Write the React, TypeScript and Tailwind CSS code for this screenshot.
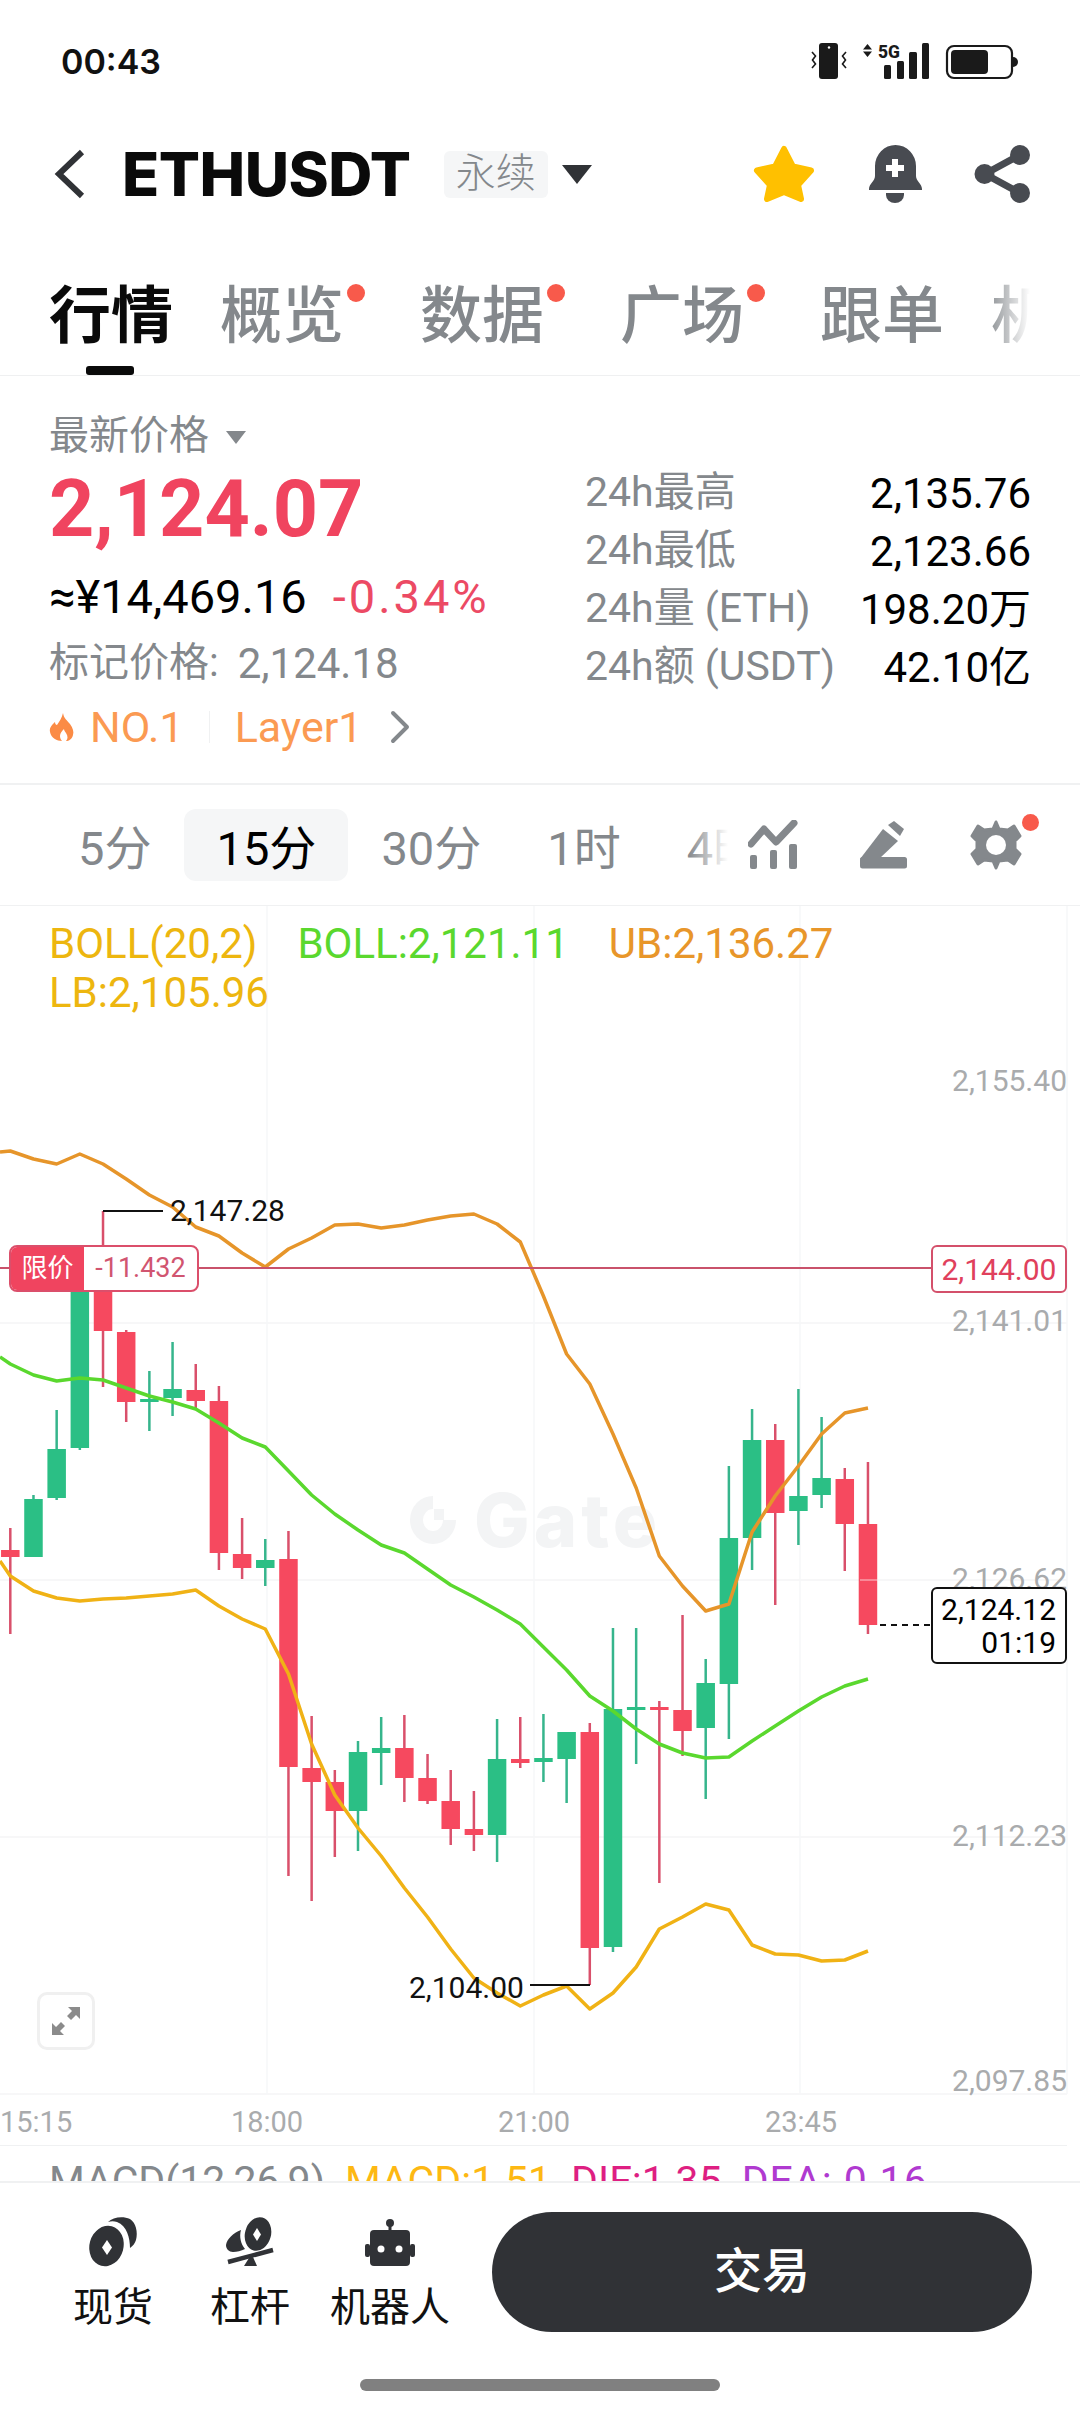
import { ChevronRight } from 'lucide-react';

// [wickTop, bodyTop, bodyBottom, wickBottom, up]
const CANDLES: [number, number, number, number, boolean][] = [
  [1528, 1550, 1557, 1634, false],
  [1495, 1499, 1557, 1557, true],
  [1410, 1449, 1498, 1500, true],
  [1280, 1285, 1448, 1450, true],
  [1211, 1285, 1331, 1387, false],
  [1330, 1332, 1402, 1422, false],
  [1371, 1399, 1402, 1431, true],
  [1342, 1389, 1398, 1416, true],
  [1364, 1390, 1401, 1409, false],
  [1386, 1401, 1553, 1570, false],
  [1518, 1554, 1568, 1579, false],
  [1539, 1560, 1568, 1586, true],
  [1531, 1559, 1767, 1876, false],
  [1716, 1768, 1782, 1901, false],
  [1770, 1782, 1811, 1857, false],
  [1741, 1752, 1811, 1851, true],
  [1717, 1748, 1753, 1785, true],
  [1715, 1748, 1778, 1802, false],
  [1754, 1778, 1801, 1804, false],
  [1770, 1801, 1829, 1845, false],
  [1791, 1829, 1835, 1851, false],
  [1719, 1759, 1835, 1862, true],
  [1717, 1759, 1763, 1768, false],
  [1714, 1758, 1762, 1782, true],
  [1732, 1732, 1759, 1803, true],
  [1723, 1732, 1948, 1985, false],
  [1628, 1709, 1947, 1952, true],
  [1628, 1707, 1709, 1764, true],
  [1701, 1707, 1710, 1883, false],
  [1615, 1710, 1731, 1756, false],
  [1659, 1683, 1728, 1799, true],
  [1466, 1538, 1684, 1739, true],
  [1409, 1440, 1538, 1570, true],
  [1424, 1440, 1513, 1605, false],
  [1389, 1496, 1511, 1545, true],
  [1417, 1478, 1495, 1508, true],
  [1468, 1479, 1524, 1571, false],
  [1462, 1524, 1625, 1634, false],
];

const UB = [1151, 1159, 1164, 1154, 1164, 1179, 1195, 1207, 1227, 1236, 1253, 1267, 1249, 1238, 1225, 1224, 1228, 1225, 1220, 1216, 1214, 1224, 1242, 1296, 1354, 1384, 1434, 1488, 1556, 1586, 1611, 1604, 1532, 1496, 1466, 1434, 1413, 1408];
const MB = [1364, 1375, 1381, 1378, 1380, 1388, 1396, 1402, 1409, 1423, 1438, 1447, 1471, 1495, 1514, 1530, 1545, 1553, 1569, 1585, 1597, 1610, 1624, 1647, 1670, 1696, 1711, 1729, 1744, 1753, 1758, 1757, 1741, 1726, 1711, 1697, 1686, 1679];
const LB = [1576, 1591, 1598, 1601, 1599, 1598, 1596, 1594, 1590, 1606, 1619, 1629, 1674, 1744, 1795, 1828, 1856, 1888, 1917, 1949, 1978, 1993, 2006, 1995, 1986, 2009, 1993, 1967, 1929, 1917, 1904, 1910, 1945, 1954, 1955, 1961, 1960, 1951];

const xAt = (i: number) => 10.3 + 23.18 * i;
const linePoints = (ys: number[], startY: number) =>
  `0,${startY} ` + ys.map((y, i) => `${xAt(i).toFixed(1)},${y}`).join(' ');

function StatusIcons() {
  return (
    <svg width="210" height="44" viewBox="811 40 210 44" className="shrink-0">
      <rect x="819" y="44" width="19" height="36" rx="3" fill="#1a1a1a" />
      <circle cx="829" cy="48.5" r="1.2" fill="#fff" />
      <path d="M812 53l3.5 4-3 4 3 4-3.500 4M846 53l-3.500 4 3 4-3 4 3.500 4" fill="none" stroke="#1a1a1a" strokeWidth="1.600" />
      <path d="M863 50.500l4.500-5.500 4.500 5.500zM863 52.500h9l-4.500 5.500z" fill="#1a1a1a" />
      <text x="878" y="59" fontSize="19" fontWeight="800" fill="#1a1a1a" fontFamily="Roboto, sans-serif" textLength="22" lengthAdjust="spacingAndGlyphs">5G</text>
      <rect x="884" y="66" width="7" height="14" rx="1.500" fill="#1a1a1a" />
      <rect x="897" y="62" width="7" height="18" rx="1.500" fill="#1a1a1a" />
      <rect x="909" y="53" width="8" height="27" rx="1.500" fill="#1a1a1a" />
      <rect x="922" y="44" width="7" height="36" rx="1.500" fill="#1a1a1a" />
      <rect x="947" y="47" width="65" height="32" rx="7" fill="none" stroke="#1a1a1a" strokeWidth="2.200" />
      <rect x="951" y="51" width="37" height="24" rx="4" fill="#1a1a1a" />
      <path d="M1013 58a5 5 0 0 1 0 10z" fill="#1a1a1a" />
    </svg>
  );
}

function BackIcon() {
  return (
    <svg width="32" height="50" viewBox="54 149 32 50" className="shrink-0">
      <path d="M82 152l-23 22 23 22" fill="none" stroke="#303236" strokeWidth="6" />
    </svg>
  );
}

function StarIcon() {
  return (
    <svg width="62" height="58" viewBox="752 145 62 58">
      <path
        d="M783 149l9 17.500 18 4-13 14.500 3 14-17-7-17 7 3-14-13-14.500 18-4z"
        fill="#FFC000"
        stroke="#FFC000"
        strokeWidth="6"
        strokeLinejoin="round"
      />
    </svg>
  );
}

function BellIcon() {
  return (
    <svg width="54" height="58" viewBox="866 145 54 58">
      <path d="M872 166a20.500 21 0 0 1 41 0v10c0 5 6 8 6 13v1h-53v-1c0-5 6-8 6-13z" fill="#484B51" />
      <path d="M883 193h18v2a9 8 0 0 1-18 0z" fill="#484B51" />
      <path d="M892 159v18M883 168h18" stroke="#fff" strokeWidth="6" />
    </svg>
  );
}

function ShareIcon() {
  return (
    <svg width="56" height="58" viewBox="974 145 56 58">
      <path d="M1020 155l-35 19 35 19" fill="none" stroke="#484B51" strokeWidth="7" />
      <circle cx="1020" cy="155" r="10" fill="#484B51" />
      <circle cx="984.500" cy="174" r="10" fill="#484B51" />
      <circle cx="1020" cy="193" r="10" fill="#484B51" />
    </svg>
  );
}

function FlameIcon() {
  return (
    <svg width="26" height="30" viewBox="50 711 26 30" className="shrink-0">
      <path
        d="M64 712c1 6 4 7 7 11 3 4 4 8 3 11-1 4-4 6-7 6 2-2 2-5 0-8-1-1-2-3-2-4-2 2-4 4-4 7 0 2 1 4 2 5-5 0-11-3-12-9-1-5 3-8 5-10 0 2 1 3 2 3 2-3 5-7 6-12z"
        fill="#FB8B45"
      />
    </svg>
  );
}

function IndicatorIcon() {
  return (
    <svg width="50" height="50" viewBox="748 820 50 50">
      <path d="M751 844l13-15 12 13 18-19" fill="none" stroke="#84888C" strokeWidth="7" strokeLinejoin="round" strokeLinecap="round" />
      <rect x="750" y="855" width="7" height="14" rx="2" fill="#84888C" />
      <rect x="770" y="850" width="7" height="19" rx="2" fill="#84888C" />
      <rect x="789" y="844" width="8" height="25" rx="2" fill="#84888C" />
    </svg>
  );
}

function PenIcon() {
  return (
    <svg width="48" height="50" viewBox="860 820 48 50">
      <path d="M860 859l23-30 15 12-18 17z" fill="#84888C" />
      <path d="M888 825l6-4 10 8-4 7z" fill="#84888C" />
      <rect x="860" y="857" width="47" height="11.500" rx="2.500" fill="#84888C" />
    </svg>
  );
}

function GearIcon() {
  return (
    <svg width="52" height="52" viewBox="970 819 52 52">
      <path
        d="M996 822l3 7 9 1 6-4 6 10-5 5v8l5 5-6 10-6-4-9 1-3 7-3-7-9-1-6 4-6-10 5-5v-8l-5-5 6-10 6 4 9-1z"
        fill="#84888C"
        stroke="#84888C"
        strokeWidth="3"
        strokeLinejoin="round"
      />
      <circle cx="996" cy="845" r="10" fill="#fff" />
    </svg>
  );
}

function SpotIcon() {
  return (
    <svg width="50" height="52" viewBox="89 2216 50 52">
      <path d="M109 2222c5-5 15-6 22-3 6 4 8 13 6 21-1 3-3 6-6 8 0-10-3-22-13-26-3-1-6-1-9 0z" fill="#303236" />
      <ellipse cx="107.500" cy="2246" rx="17" ry="20.500" transform="rotate(15 107.500 2246)" fill="#303236" />
      <path d="M108 2240l5 7.500-5 7.500-5-7.500z" fill="#fff" />
    </svg>
  );
}

function MarginIcon() {
  return (
    <svg width="50" height="52" viewBox="228 2216 50 52">
      <ellipse cx="261" cy="2234" rx="13" ry="17" transform="rotate(15 261 2234)" fill="#303236" />
      <path d="M260 2228l4 6.500-4 6.500-4-6.500z" fill="#fff" />
      <path d="M244 2230c-8 3-14 9-15 15 0 4 3 7 7 7 4 0 8-1 12-3-4-5-6-12-4-19z" fill="#303236" />
      <path d="M231 2262l45-12" stroke="#303236" strokeWidth="4.500" />
      <path d="M247 2266h13l-4-9-4 1z" fill="#303236" />
    </svg>
  );
}

function RobotIcon() {
  return (
    <svg width="52" height="50" viewBox="364 2214 52 50">
      <circle cx="390" cy="2219" r="4" fill="#303236" />
      <rect x="388.500" y="2220" width="3" height="8" fill="#303236" />
      <rect x="370" y="2226" width="40" height="36" rx="4" fill="#303236" />
      <rect x="365" y="2240" width="5" height="13" rx="2" fill="#303236" />
      <rect x="410" y="2240" width="5" height="13" rx="2" fill="#303236" />
      <circle cx="381" cy="2245" r="3.500" fill="#fff" />
      <circle cx="399" cy="2245" r="3.500" fill="#fff" />
    </svg>
  );
}

function ChartDrawing() {
  return (
    <svg width="1080" height="1189" viewBox="0 906 1080 1189" className="absolute left-0 top-0">
      {[1323, 1580, 1837, 2094].map((y) => (
        <line key={y} x1="0" x2="1067" y1={y} y2={y} stroke="#F4F5F6" strokeWidth="1.500" />
      ))}
      {[267, 534, 800, 1067].map((x) => (
        <line key={x} x1={x} x2={x} y1="906" y2="2094" stroke="#F6F7F8" strokeWidth="1.500" />
      ))}
      {CANDLES.map(([wickTop, top, bottom, wickBottom, up], i) => {
        const x = xAt(i);
        return (
          <g key={i}>
            <line x1={x} x2={x} y1={wickTop} y2={wickBottom} stroke={up ? '#36B58C' : '#D9506B'} strokeWidth="2.500" />
            <rect x={x - 9.250} y={top} width="18.500" height={Math.max(bottom - top, 3)} fill={up ? '#2BBF85' : '#F6495F'} />
          </g>
        );
      })}
      <line x1="860" x2="878" y1="1580" y2="1580" stroke="#fff" strokeWidth="1" opacity="0.700" />
      <polyline points={linePoints(UB, 1152)} fill="none" stroke="#E6952A" strokeWidth="3.500" strokeLinejoin="round" />
      <polyline points={linePoints(MB, 1357)} fill="none" stroke="#5AD82E" strokeWidth="3.500" strokeLinejoin="round" />
      <polyline points={linePoints(LB, 1561)} fill="none" stroke="#F0B215" strokeWidth="3.500" strokeLinejoin="round" />
      <line x1="0" x2="931" y1="1268" y2="1268" stroke="#C9526B" strokeWidth="2" />
      <path d="M103 1211h60M530 1985h60" fill="none" stroke="#111" strokeWidth="2" />
      <line x1="880" x2="931" y1="1625" y2="1625" stroke="#111" strokeWidth="2" strokeDasharray="6 5" />
    </svg>
  );
}

function PriceAxisLabel({ className, children }: { className: string; children: string }) {
  return <div className={`absolute right-[13px] text-[30px] leading-[36px] text-[#A9ABAD] ${className}`}>{children}</div>;
}

function StatRow({ label, value }: { label: string; value: string }) {
  return (
    <div className="flex h-[58px] items-center justify-between">
      <span className="text-[41px] text-[#84888C]">{label}</span>
      <span className="text-[42px] text-black">{value}</span>
    </div>
  );
}

function Tab({ label, dot }: { label: string; dot?: boolean }) {
  return (
    <div className={`relative shrink-0 font-medium text-[#84888C] ${dot ? 'pr-[29px]' : ''}`}>
      {label}
      {dot && <span className="absolute left-[127px] top-[3px] h-[18px] w-[18px] rounded-full bg-[#F85A4B]" />}
    </div>
  );
}

export default function App() {
  return (
    <div className="relative h-[2412px] w-[1080px] overflow-hidden bg-white font-[Roboto,'Noto_Sans_CJK_SC',sans-serif]">
      {/* Status bar */}
      <div className="flex h-[122px] items-center justify-between pl-[61px] pr-[59px]">
        <span className="font-[Inter] text-[34px] font-semibold text-[#111]">00:43</span>
        <StatusIcons />
      </div>

      {/* Header */}
      <div className="flex h-[104px] items-center justify-between pl-[54px] pr-[50px]">
        <div className="flex items-center">
          <BackIcon />
          <span className="ml-[36px] font-[Inter] text-[61px] font-extrabold leading-none tracking-[-0.5px] text-[#0a0a0a]">ETHUSDT</span>
          <span className="ml-[33px] flex h-[47px] w-[104px] items-center justify-center rounded-[6px] bg-[#F5F6F7] text-[40px] font-light text-[#84888C]">永续</span>
          <span className="ml-[14px] h-0 w-0 border-x-[15px] border-t-[19px] border-x-transparent border-t-[#303236]" />
        </div>
        <div className="flex items-center">
          <StarIcon />
          <div className="ml-[54px]"><BellIcon /></div>
          <div className="ml-[51px]"><ShareIcon /></div>
        </div>
      </div>

      {/* Tabs */}
      <div className="relative h-[150px] border-b border-[#EFF0F1]">
        <div className="flex w-[1030px] gap-[47px] overflow-hidden pl-[49px] pt-[55px] text-[62px] leading-[72px]">
          <div className="shrink-0 font-semibold text-[#0a0a0a]">行情</div>
          <Tab label="概览" dot />
          <Tab label="数据" dot />
          <Tab label="广场" dot />
          <Tab label="跟单" />
          <Tab label="机器人" />
        </div>
        <div className="absolute left-[985px] top-[50px] h-[80px] w-[45px] bg-gradient-to-r from-white/0 to-white" />
        <div className="absolute bottom-0 left-[86px] h-[9px] w-[48px] rounded-[3px] bg-[#0a0a0a]" />
      </div>

      {/* Price summary */}
      <div className="flex h-[409px] border-b-2 border-[#F0F1F2] text-[40px]">
        <div className="w-[585px] pl-[49px] pt-[34px]">
          <div className="flex h-[52px] items-center text-[#84888C]">
            最新价格
            <span className="ml-[17px] mt-[2px] h-0 w-0 border-x-[10px] border-t-[13px] border-x-transparent border-t-[#84888C]" />
          </div>
          <div className="flex h-[94px] items-center text-[79px] font-bold leading-none text-[#F0445F]">2,124.07</div>
          <div className="flex h-[82px] items-center text-[47px]">
            <span className="text-black">≈¥14,469.16</span>
            <span className="ml-[26px] tracking-[3px] text-[#EC4A64]">-0.34%</span>
          </div>
          <div className="flex h-[50px] items-center text-[#84888C]">
            标记价格: <span className="ml-[19px] text-[42px]">2,124.18</span>
          </div>
          <div className="flex h-[78px] items-center text-[43px] text-[#FB9A52]">
            <FlameIcon />
            <span className="ml-[15px]">NO.1</span>
            <span className="mx-[25px] h-[32px] w-px bg-[#F0F1F2]" />
            <span>Layer1</span>
            <ChevronRight className="ml-[10px] h-[56px] w-[56px] text-[#84888C]" strokeWidth={1.700} />
          </div>
        </div>
        <div className="w-[446px] pt-[88px]">
          <StatRow label="24h最高" value="2,135.76" />
          <StatRow label="24h最低" value="2,123.66" />
          <StatRow label="24h量 (ETH)" value="198.20万" />
          <StatRow label="24h额 (USDT)" value="42.10亿" />
        </div>
      </div>

      {/* Interval selector */}
      <div className="flex h-[121px] items-center border-b border-[#F0F1F2] text-[47px]">
        <div className="relative flex w-[728px] shrink-0 items-center overflow-hidden pl-[45px]">
          <span className="h-[72px] shrink-0 px-[33px] leading-[80px] text-[#84888C]">5分</span>
          <span className="h-[72px] w-[164px] shrink-0 rounded-[12px] bg-[#F5F6F7] text-center leading-[80px] text-black">15分</span>
          <span className="h-[72px] shrink-0 px-[33px] leading-[80px] text-[#84888C]">30分</span>
          <span className="h-[72px] shrink-0 px-[33px] leading-[80px] text-[#84888C]">1时</span>
          <span className="h-[72px] shrink-0 px-[33px] leading-[80px] text-[#84888C]">4时</span>
          <div className="absolute right-0 top-0 h-[72px] w-[40px] bg-gradient-to-r from-white/0 to-white" />
        </div>
        <div className="ml-[20px]"><IndicatorIcon /></div>
        <div className="ml-[62px]"><PenIcon /></div>
        <div className="relative ml-[62px]">
          <GearIcon />
          <span className="absolute left-[52px] top-[-5px] h-[17px] w-[17px] rounded-full bg-[#F85A4B]" />
        </div>
      </div>

      {/* Chart */}
      <div className="relative h-[1189px]">
        {/* Watermark sits under the candles */}
        <div className="absolute left-[410px] top-[586px] flex h-[56px] items-center text-[#F3F4F5]">
          <svg width="46" height="50" viewBox="0 0 46 50">
            <path d="M23 1a23 24 0 1 0 23 24H33a10 11 0 1 1-10-11z" fill="#F3F4F5" />
            <rect x="24" y="14" width="10" height="11" fill="#F3F4F5" />
          </svg>
          <span className="ml-[18px] font-[Inter] text-[74px] font-extrabold leading-none tracking-[4px]">Gate</span>
        </div>

        <ChartDrawing />

        <div className="relative flex flex-wrap gap-x-[40px] px-[49px] pt-[13px] text-[42px] leading-[49px]">
          <span className="text-[#EDB60F]">BOLL(20,2)</span>
          <span className="text-[#5AD82E]">BOLL:2,121.11</span>
          <span className="text-[#E8962A]">UB:2,136.27</span>
          <span className="text-[#EDB60F]">LB:2,105.96</span>
        </div>

        <PriceAxisLabel className="top-[157px]">2,155.40</PriceAxisLabel>
        <PriceAxisLabel className="top-[397px]">2,141.01</PriceAxisLabel>
        <PriceAxisLabel className="top-[655px]">2,126.62</PriceAxisLabel>
        <PriceAxisLabel className="top-[912px]">2,112.23</PriceAxisLabel>
        <PriceAxisLabel className="top-[1157px]">2,097.85</PriceAxisLabel>

        {/* Limit order tag */}
        <div className="absolute left-[9px] top-[339px] flex h-[47px] w-[190px] overflow-hidden rounded-[8px] border-2 border-[#DB4F6B] bg-white">
          <span className="flex w-[73px] items-center justify-center bg-[#F0445F] text-[26px] text-white">限价</span>
          <span className="flex flex-1 items-center justify-center text-[27px] text-[#D15570]">-11.432</span>
        </div>
        <div className="absolute left-[931px] top-[339px] flex h-[48px] w-[136px] items-center justify-center rounded-[6px] border-2 border-[#D4506B] bg-white text-[30px] text-[#E0405C]">
          2,144.00
        </div>

        <div className="absolute left-[170px] top-[287px] text-[30px] leading-[36px] text-[#111]">2,147.28</div>
        <div className="absolute left-[409px] top-[1064px] text-[30px] leading-[36px] text-[#111]">2,104.00</div>

        {/* Last price */}
        <div className="absolute left-[931px] top-[681px] flex h-[77px] w-[136px] flex-col justify-center rounded-[6px] border-2 border-[#111] bg-white pr-[9px] text-right text-[30px] leading-[33px] text-black">
          <span>2,124.12</span>
          <span>01:19</span>
        </div>

        {/* Fullscreen toggle */}
        <div className="absolute left-[37px] top-[1086px] flex h-[58px] w-[58px] items-center justify-center rounded-[10px] border-[3px] border-[#F0F0F0] bg-white">
          <svg width="28" height="28" viewBox="0 0 28 28">
            <path d="M16 0h12v12l-4-4-5 5-4-4 5-5zM12 28H0V16l4 4 5-5 4 4-5 5z" fill="#8B8B8B" />
          </svg>
        </div>
      </div>

      {/* Time axis */}
      <div className="flex h-[51px] w-[1067px] items-center border-b border-[#F0F1F2] pt-[5px] text-[29px] text-[#A9ABAD]">
        <span className="w-[133.500px]">15:15</span>
        <span className="w-[267px] text-center">18:00</span>
        <span className="w-[267px] text-center">21:00</span>
        <span className="w-[267px] text-center">23:45</span>
      </div>

      {/* MACD legend, cut off by the bottom bar */}
      <div className="flex h-[35px] gap-x-[20px] overflow-hidden pl-[49px] pt-[10px] text-[41px] leading-[50px]">
        <span className="text-[#84888C]">MACD(12,26,9)</span>
        <span className="text-[#FDB813]">MACD:1.51</span>
        <span className="text-[#DE1F82]">DIF:1.35</span>
        <span className="tracking-[1px] text-[#B03AD0]">DEA: 0.16</span>
      </div>

      {/* Bottom bar */}
      <div className="h-[231px] border-t-2 border-[#F0F1F2] bg-white">
        <div className="flex items-start pl-[53px] pr-[48px] pt-[29px]">
          <div className="flex w-[120px] flex-col items-center">
            <div className="flex h-[56px] items-end"><SpotIcon /></div>
            <span className="mt-[16px] text-[40px] leading-[48px] text-[#111]">现货</span>
          </div>
          <div className="ml-[17px] flex w-[120px] flex-col items-center">
            <div className="flex h-[56px] items-end"><MarginIcon /></div>
            <span className="mt-[16px] text-[40px] leading-[48px] text-[#111]">杠杆</span>
          </div>
          <div className="ml-[20px] flex w-[120px] flex-col items-center">
            <div className="flex h-[56px] items-end"><RobotIcon /></div>
            <span className="mt-[16px] text-[40px] leading-[48px] text-[#111]">机器人</span>
          </div>
          <button className="ml-[42px] flex h-[120px] flex-1 items-center justify-center rounded-[60px] bg-[#303236] text-[48px] font-medium text-white">
            交易
          </button>
        </div>
      </div>

      <div className="absolute bottom-[21px] left-[360px] h-[12px] w-[360px] rounded-full bg-[#808080]" />
    </div>
  );
}
